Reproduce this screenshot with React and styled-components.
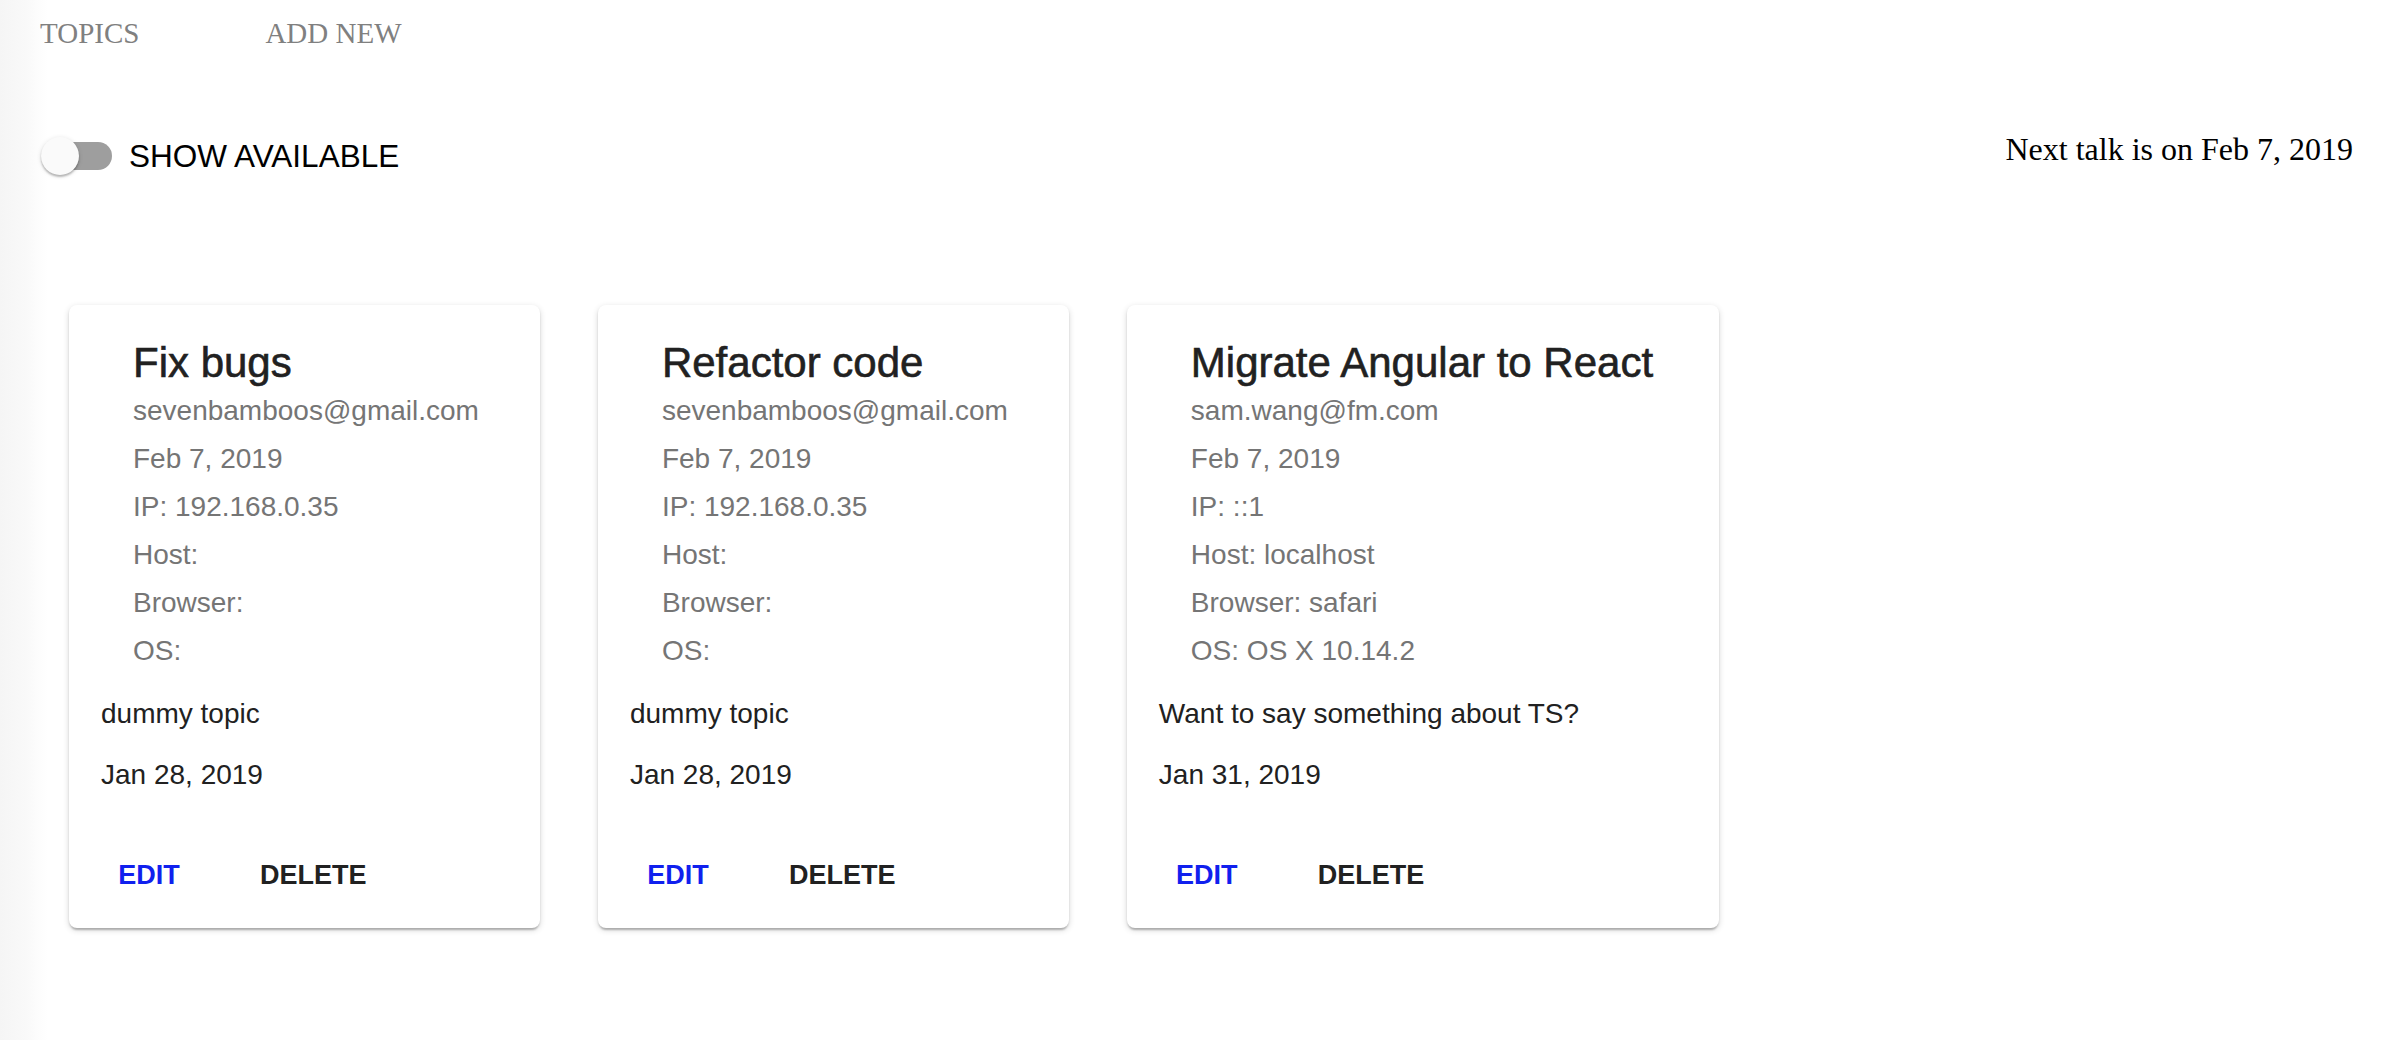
import styled, { createGlobalStyle } from 'styled-components';

const GlobalStyle = createGlobalStyle`
  body {
    margin: 0;
    background: linear-gradient(to right, #f5f5f5 0, #f9f9f9 26px, #fdfdfd 40px, #ffffff 48px);
    font-family: "Liberation Serif", "Times New Roman", serif;
  }
`;

const Page = styled.div`
  min-height: 100vh;
`;

const Nav = styled.nav`
  display: flex;
  gap: 126px;
  padding: 17px 0 0 40px;
`;

const NavLink = styled.a`
  font-family: "Liberation Serif", "Times New Roman", serif;
  font-size: 29px;
  line-height: 32px;
  color: #808080;
  text-transform: uppercase;
  text-decoration: none;
  cursor: pointer;
`;

const Toolbar = styled.div`
  display: flex;
  justify-content: space-between;
  margin-top: 82px;
  padding: 0 35px 0 40px;
`;

const SwitchLabel = styled.label`
  display: flex;
  align-items: center;
  height: 50px;
  cursor: pointer;
`;

const SwitchBox = styled.span`
  position: relative;
  width: 72px;
  height: 40px;
`;

const Track = styled.span`
  position: absolute;
  left: 4px;
  top: 6px;
  width: 68px;
  height: 28px;
  border-radius: 14px;
  background: ${({ checked }) => (checked ? '#7986cb' : '#9e9e9e')};
`;

const Thumb = styled.span`
  position: absolute;
  top: 1px;
  left: ${({ checked }) => (checked ? '34px' : '1px')};
  width: 38px;
  height: 38px;
  border-radius: 50%;
  background: #fafafa;
  box-shadow: 0 2px 2px rgba(0, 0, 0, 0.24), 0 1px 5px rgba(0, 0, 0, 0.12);
`;

const LabelText = styled.span`
  margin-left: 17px;
  font-family: "Liberation Sans", Arial, sans-serif;
  font-size: 31.5px;
  line-height: 40px;
  color: #000;
`;

const NextTalk = styled.div`
  font-family: "Liberation Serif", "Times New Roman", serif;
  font-size: 32px;
  color: #000;
`;

const CardGrid = styled.div`
  display: flex;
  align-items: flex-start;
  gap: 58px;
  margin-top: 124px;
  padding-left: 69px;
`;

const Card = styled.div`
  background: #fff;
  border-radius: 8px;
  box-shadow: 0 2px 6px rgba(0, 0, 0, 0.16), 0 2px 2px rgba(0, 0, 0, 0.12),
    0 4px 2px -2px rgba(0, 0, 0, 0.14);
  font-family: "Liberation Sans", Arial, sans-serif;
`;

const CardHead = styled.div`
  padding: 34px 61px 0 64px;
`;

const Title = styled.h2`
  margin: 0;
  padding-right: 5px;
  font-size: 42px;
  font-weight: 400;
  line-height: 48px;
  color: #212121;
  -webkit-text-stroke: 0.6px #212121;
  white-space: nowrap;
`;

const Meta = styled.div`
  font-size: 28px;
  line-height: 48px;
  color: #757575;
  white-space: nowrap;
`;

const CardBody = styled.div`
  padding: 18px 32px 27px;
`;

const BodyLine = styled.p`
  margin: ${({ first }) => (first ? '0' : '19px 0 0')};
  font-size: 28px;
  line-height: 42px;
  color: #212121;
  white-space: nowrap;
`;

const Actions = styled.div`
  display: flex;
  gap: 31px;
  padding: 16px;
`;

const ActionButton = styled.button`
  min-width: 128px;
  padding: 12px 16px;
  border: none;
  background: transparent;
  font-family: "Liberation Sans", Arial, sans-serif;
  font-size: 27px;
  font-weight: 700;
  line-height: 49px;
  text-transform: uppercase;
  color: ${({ primary }) => (primary ? '#1020ee' : '#212121')};
  cursor: pointer;
`;

const topics = [
  {
    title: 'Fix bugs',
    email: 'sevenbamboos@gmail.com',
    date: 'Feb 7, 2019',
    ip: '192.168.0.35',
    host: '',
    browser: '',
    os: '',
    description: 'dummy topic',
    created: 'Jan 28, 2019',
  },
  {
    title: 'Refactor code',
    email: 'sevenbamboos@gmail.com',
    date: 'Feb 7, 2019',
    ip: '192.168.0.35',
    host: '',
    browser: '',
    os: '',
    description: 'dummy topic',
    created: 'Jan 28, 2019',
  },
  {
    title: 'Migrate Angular to React',
    email: 'sam.wang@fm.com',
    date: 'Feb 7, 2019',
    ip: '::1',
    host: 'localhost',
    browser: 'safari',
    os: 'OS X 10.14.2',
    description: 'Want to say something about TS?',
    created: 'Jan 31, 2019',
  },
];

function TopicCard({ topic }) {
  return (
    <Card>
      <CardHead>
        <Title>{topic.title}</Title>
        <Meta>{topic.email}</Meta>
        <Meta>{topic.date}</Meta>
        <Meta>IP: {topic.ip}</Meta>
        <Meta>Host: {topic.host}</Meta>
        <Meta>Browser: {topic.browser}</Meta>
        <Meta>OS: {topic.os}</Meta>
      </CardHead>
      <CardBody>
        <BodyLine first>{topic.description}</BodyLine>
        <BodyLine>{topic.created}</BodyLine>
      </CardBody>
      <Actions>
        <ActionButton primary>Edit</ActionButton>
        <ActionButton>Delete</ActionButton>
      </Actions>
    </Card>
  );
}

export default function App() {
  return (
    <Page>
      <GlobalStyle />
      <Nav>
        <NavLink>Topics</NavLink>
        <NavLink>Add new</NavLink>
      </Nav>
      <Toolbar>
        <SwitchLabel>
          <SwitchBox>
            <Track />
            <Thumb />
          </SwitchBox>
          <LabelText>SHOW AVAILABLE</LabelText>
        </SwitchLabel>
        <NextTalk>Next talk is on Feb 7, 2019</NextTalk>
      </Toolbar>
      <CardGrid>
        {topics.map((topic) => (
          <TopicCard key={topic.title} topic={topic} />
        ))}
      </CardGrid>
    </Page>
  );
}
